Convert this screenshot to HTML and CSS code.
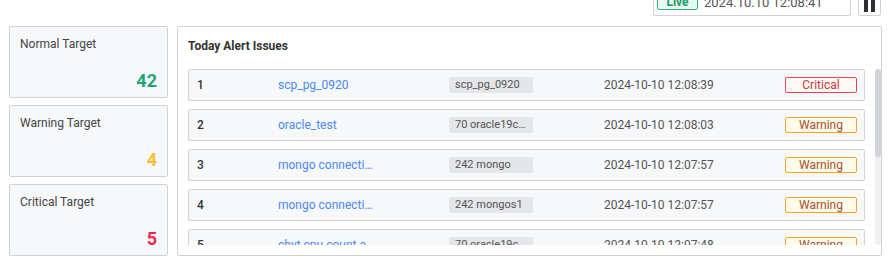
FILE: index.html
```html
<!DOCTYPE html>
<html lang="en">
  <head>
    <meta charset="UTF-8" />
    <title>Today Alert Issues</title>
    <link rel="stylesheet" href="styles.css">
  </head>
  <body>
    <div class="topbar">
      <div class="clock">
        <span class="live">Live</span>
        <span class="clock-time">2024.10.10 12:08:41</span>
      </div>
      <button class="pause" title="Pause">
        <svg width="11" height="14" viewBox="0 0 11 14"><rect x="0" y="0" width="4" height="14" fill="#2b2f33"/><rect x="7" y="0" width="4" height="14" fill="#2b2f33"/></svg>
      </button>
    </div>

    <div class="dashboard">
      <div class="summary">
        <div class="card">
          <div class="card-label">Normal Target</div>
          <div class="card-value normal">42</div>
        </div>
        <div class="card">
          <div class="card-label">Warning Target</div>
          <div class="card-value warning">4</div>
        </div>
        <div class="card">
          <div class="card-label">Critical Target</div>
          <div class="card-value critical">5</div>
        </div>
      </div>

      <div class="panel">
        <h3 class="panel-title">Today Alert Issues</h3>
        <div class="panel-body">
          <div class="issue-list">
            <div class="issue">
              <span class="issue-no">1</span>
              <a class="issue-name">scp_pg_0920</a>
              <span class="issue-tag">scp_pg_0920</span>
              <span class="issue-time">2024-10-10 12:08:39</span>
              <span class="level level-critical">Critical</span>
            </div>
            <div class="issue">
              <span class="issue-no">2</span>
              <a class="issue-name">oracle_test</a>
              <span class="issue-tag">70 oracle19c_test</span>
              <span class="issue-time">2024-10-10 12:08:03</span>
              <span class="level level-warning">Warning</span>
            </div>
            <div class="issue">
              <span class="issue-no">3</span>
              <a class="issue-name">mongo connection check</a>
              <span class="issue-tag">242 mongo</span>
              <span class="issue-time">2024-10-10 12:07:57</span>
              <span class="level level-warning">Warning</span>
            </div>
            <div class="issue">
              <span class="issue-no">4</span>
              <a class="issue-name">mongo connection check</a>
              <span class="issue-tag">242 mongos1</span>
              <span class="issue-time">2024-10-10 12:07:57</span>
              <span class="level level-warning">Warning</span>
            </div>
            <div class="issue">
              <span class="issue-no">5</span>
              <a class="issue-name">cbyt cpu count alert</a>
              <span class="issue-tag">70 oracle19c_test</span>
              <span class="issue-time">2024-10-10 12:07:48</span>
              <span class="level level-warning">Warning</span>
            </div>
            <div class="issue">
              <span class="issue-no">6</span>
              <a class="issue-name">pg_session_count</a>
              <span class="issue-tag">scp_pg_0920</span>
              <span class="issue-time">2024-10-10 12:06:12</span>
              <span class="level level-critical">Critical</span>
            </div>
          </div>
          <div class="scroll-track">
            <div class="scroll-thumb"></div>
          </div>
        </div>
      </div>
    </div>
  </body>
</html>
```

FILE: styles.css
```css
body {
  margin: 0;
  font-family: Roboto, "Liberation Sans", Arial, sans-serif;
  font-size: 12px;
  color: #333;
  background: #fff;
}
.topbar {
  display: flex;
  justify-content: flex-end;
  gap: 7px;
  margin-top: -9px;
  padding-right: 9px;
  height: 25px;
}
.clock {
  display: flex;
  align-items: center;
  gap: 6px;
  width: 190px;
  padding: 0 3px;
  border: 1px solid #cfd2d6;
  border-radius: 2px;
}
.live {
  box-sizing: border-box;
  width: 41px;
  height: 16px;
  margin-top: -3px;
  border: 1px solid #2fb386;
  border-radius: 2px;
  background: #e9f8f1;
  color: #1c9a6c;
  font-weight: bold;
  font-size: 12px;
  line-height: 14px;
  text-align: center;
}
.clock-time {
  margin-top: -2px;
  font-size: 13px;
  color: #555;
}
.pause {
  width: 23px;
  padding: 0;
  border: 1px solid #cfd2d6;
  border-radius: 2px;
  background: #fff;
  align-self: stretch;
}
.pause svg {
  display: block;
  margin: 3px auto 0;
}
.dashboard {
  display: flex;
  gap: 9px;
  padding: 10px 8px 0 9px;
}
.summary {
  flex: none;
  display: flex;
  flex-direction: column;
  gap: 7px;
  width: 159px;
}
.card {
  box-sizing: border-box;
  height: 72px;
  padding: 10px 10px 6px;
  border: 1px solid #cfd2d6;
  border-radius: 2px;
  background: #f7f8fa;
  display: flex;
  flex-direction: column;
  justify-content: space-between;
}
.card-label {
  color: #444;
  font-size: 12px;
}
.card-value {
  text-align: right;
  font-size: 18px;
  font-weight: bold;
}
.normal { color: #1fa37a; }
.warning { color: #f6c033; }
.critical { color: #f2264b; }
.panel {
  box-sizing: border-box;
  flex: 1;
  min-width: 0;
  height: 230px;
  padding: 11px 0 10px 10px;
  border: 1px solid #cfd2d6;
  border-radius: 2px;
  display: flex;
  flex-direction: column;
}
.panel-title {
  margin: 0 0 15px;
  font-size: 12px;
  font-weight: bold;
  color: #333;
  line-height: 16px;
}
.panel-body {
  flex: 1;
  min-height: 0;
  display: flex;
  gap: 10px;
}
.issue-list {
  flex: 1;
  overflow: hidden;
  display: flex;
  flex-direction: column;
  gap: 8px;
}
.scroll-track {
  flex: none;
  width: 6px;
  border-radius: 3px;
  background: #eef0f2;
}
.scroll-thumb {
  height: 88px;
  border-radius: 3px;
  background: #d1d4d8;
}
.issue {
  flex: none;
  box-sizing: border-box;
  height: 32px;
  padding: 0 8px;
  border: 1px solid #d0d3d7;
  border-radius: 2px;
  background: #f7f8fa;
  display: grid;
  grid-template-columns: 81px 171px 155px 181px 72px;
  align-items: center;
}
.issue-no {
  color: #333;
  font-weight: 500;
}
.issue-name {
  max-width: 96px;
  overflow: hidden;
  white-space: nowrap;
  text-overflow: ellipsis;
  color: #4a89f3;
  cursor: pointer;
}
.issue-tag {
  box-sizing: border-box;
  width: 84px;
  height: 16px;
  padding: 0 4px 0 6px;
  border-radius: 2px;
  background: #e4e6e9;
  color: #555;
  font-size: 11px;
  line-height: 16px;
  overflow: hidden;
  white-space: nowrap;
  text-overflow: ellipsis;
}
.issue-time {
  color: #555;
}
.level {
  box-sizing: border-box;
  height: 16px;
  border: 1px solid;
  border-radius: 2px;
  text-align: center;
  line-height: 14px;
}
.level-critical {
  border-color: #e9474f;
  background: #fff6f6;
  color: #c43a3a;
}
.level-warning {
  border-color: #f5a524;
  background: #fffbea;
  color: #a4522a;
}
```
